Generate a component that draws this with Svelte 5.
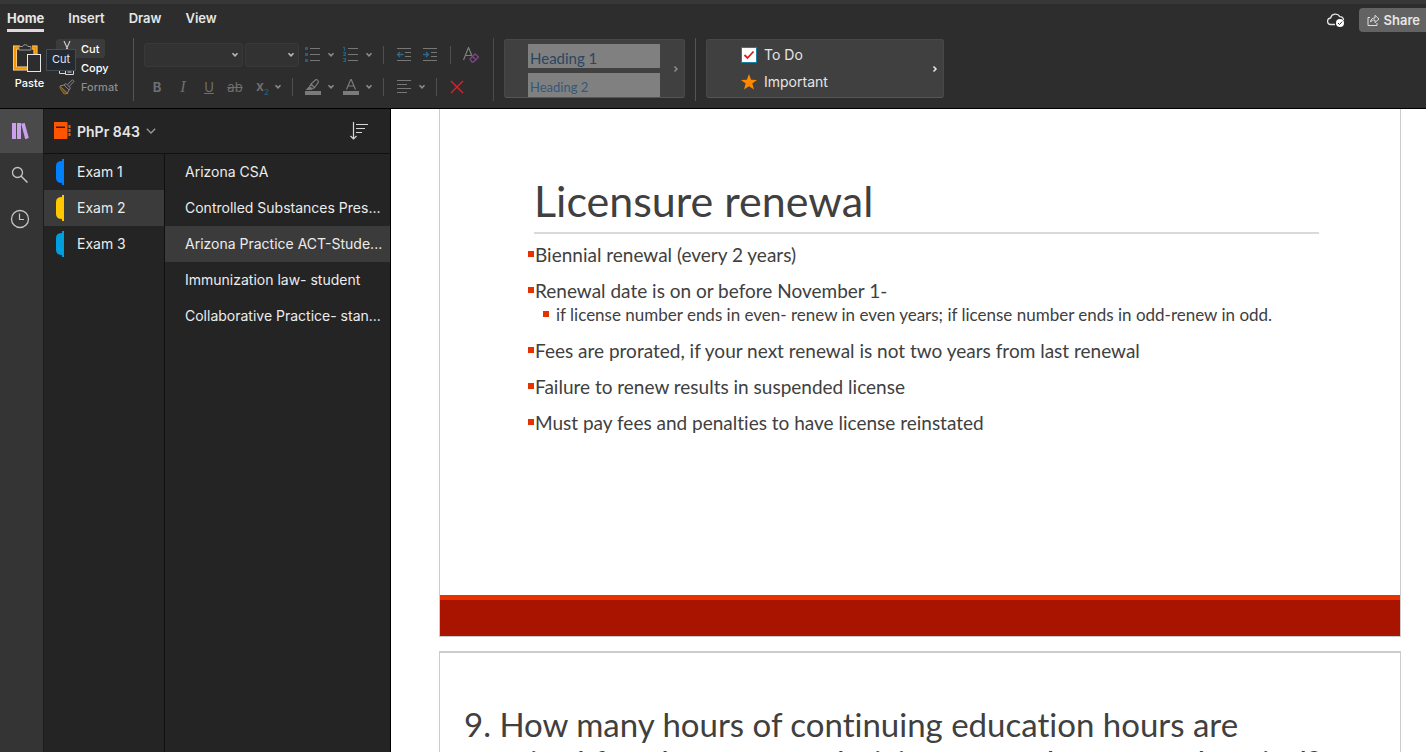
<script>
  const tabs = ['Home', 'Insert', 'Draw', 'View'];
  const sections = [
    { name: 'Exam 1', color: '#0080ff' },
    { name: 'Exam 2', color: '#ffc800' },
    { name: 'Exam 3', color: '#009edc' }
  ];
  const pages = [
    'Arizona CSA',
    'Controlled Substances Pres...',
    'Arizona Practice ACT-Stude...',
    'Immunization law- student',
    'Collaborative Practice- stan...'
  ];
  let tab = $state('Home');
  let section = $state('Exam 2');
  let page = $state(pages[2]);
</script>

{#snippet chevron()}
  <svg class="chev" width="8" height="6" viewBox="0 0 8 6" aria-hidden="true"><path d="M1.5 1.3 4 3.8l2.5-2.5" /></svg>
{/snippet}

{#snippet right()}
  <svg class="right" width="6" height="8" viewBox="0 0 6 8" aria-hidden="true"><path d="M1.5 1.5 4 4 1.5 6.5" /></svg>
{/snippet}

<div class="app">
  <header>
    <div class="tabrow">
      <nav aria-label="Ribbon tabs">
        {#each tabs as t}
          <button class="tab" class:active={tab === t} onclick={() => (tab = t)}>{t}</button>
        {/each}
      </nav>
      <div class="account">
        <svg width="18" height="14" viewBox="0 0 18 14" aria-label="Synced" role="img">
          <path d="M8 11.5H4A3.2 3.2 0 0 1 3.6 5 5 5 0 0 1 12.8 3.6 3.8 3.8 0 0 1 16.6 7" fill="none" stroke="#e4e4e4" stroke-width="1.3" />
          <circle cx="13" cy="10" r="4" fill="#fff" />
          <path d="m11 10 1.5 1.5 2.6-2.8" fill="none" stroke="#2d2d2d" />
        </svg>
        <button class="share">
          <svg width="13" height="12" viewBox="0 0 13 12" aria-hidden="true">
            <path d="M3 3.5H1v8h9V9M3.5 8c.3-3 2-4 4.5-4V1.3L12 5 8 8.6V6C6 6 4.5 6.5 3.5 8Z" fill="none" stroke="#dedede" />
          </svg>
          Share
        </button>
      </div>
    </div>

    <div class="ribbon">
      <div class="clipboard">
        <button class="paste">
          <svg width="30" height="32" viewBox="0 0 30 32" aria-hidden="true">
            <path d="M7 5.5H2v21h12M19 5.5h3.5V12" fill="none" stroke="#ffe2ae" stroke-width="4" />
            <path d="M7 5.5H2v21h12M19 5.5h3.5V12" fill="none" stroke="#f79400" stroke-width="2.6" />
            <path d="M6 8V4.5h3.5a3 3 0 0 1 5.5 0H18V8Z" fill="#2d2d2d" stroke="#9b9b9b" />
            <rect x="14.5" y="12.5" width="13" height="17" fill="#2d2d2d" stroke="#e6e6e6" />
          </svg>
          Paste
        </button>
        <div class="edits">
          <button class="edit hover">
            <svg width="16" height="16" viewBox="0 0 16 16" aria-hidden="true"><path d="m5 0 4 9M11 0 7 9" fill="none" stroke="#c8c8c8" stroke-width="1.2" /><circle cx="5" cy="12" r="2" fill="none" stroke="#c8c8c8" /><circle cx="11" cy="12" r="2" fill="none" stroke="#c8c8c8" /></svg>
            Cut
          </button>
          <button class="edit">
            <svg width="16" height="16" viewBox="0 0 16 16" aria-hidden="true"><path d="M6 13.5H.5V3.5H8M6.5 6.5h6l2 2v6h-8ZM8.5 9.5h4M8.5 12h4" fill="none" stroke="#d8d8d8" /></svg>
            Copy
          </button>
          <button class="edit" disabled>
            <svg width="16" height="16" viewBox="0 0 16 16" aria-hidden="true">
              <path d="M1 7 9 14.5 5 15 1 9ZM3 9l5 5" fill="#6b5023" stroke="#8d6c34" />
              <path d="m1 7 4-1 5 5-2 4M5 6l2-1.5L11.5 9 10 11M8.5 5.5 13.5.8l1.5 1.5-4.8 5.2" fill="none" stroke="#888" />
            </svg>
            Format
          </button>
        </div>
        <span class="tooltip" role="tooltip">Cut</span>
      </div>

      <div class="font">
        <div class="tools">
          <div class="combo wide"><select aria-label="Font" disabled><option></option></select>{@render chevron()}</div>
          <div class="combo narrow"><select aria-label="Font size" disabled><option></option></select>{@render chevron()}</div>
          <button class="tool list" aria-label="Bullets" disabled>
            <svg width="16" height="16" viewBox="0 0 16 16"><path d="M0 0h3v3H0zM0 6h3v3H0zM0 12h3v3H0z" fill="#235e7c" /><path d="M5 1.5h10M5 7.5h10M5 13.5h10" stroke="#777" /></svg>
            {@render chevron()}
          </button>
          <button class="tool" aria-label="Numbering" disabled>
            <svg width="16" height="16" viewBox="0 0 16 16"><path d="M0 .5h1.5V4M0 5.5h2.5v1L.5 8.5H3M0 11.5h2.5v3H0M1 13h1.5" fill="none" stroke="#235e7c" stroke-width="1.2" /><path d="M5 1.5h10M5 7.5h10M5 13.5h10" stroke="#777" /></svg>
            {@render chevron()}
          </button>
          <i class="bar"></i>
          <button class="tool" aria-label="Decrease indent" disabled>
            <svg width="16" height="16" viewBox="0 0 16 16"><path d="M1 1.5h14M9 5.5h6M9 9.5h6M1 13.5h14" stroke="#777" /><path d="M7.5 7.5H2M4 5 1.5 7.5 4 10" fill="none" stroke="#2a6b8d" stroke-width="1.3" /></svg>
          </button>
          <button class="tool indent" aria-label="Increase indent" disabled>
            <svg width="16" height="16" viewBox="0 0 16 16"><path d="M1 1.5h14M9 5.5h6M9 9.5h6M1 13.5h14" stroke="#777" /><path d="M1 7.5h5.5M4 5l2.5 2.5L4 10" fill="none" stroke="#2a6b8d" stroke-width="1.3" /></svg>
          </button>
          <i class="bar"></i>
          <button class="tool" aria-label="Clear formatting" disabled>
            <svg width="16" height="16" viewBox="0 0 16 16"><path d="M.5 13 5.5.5 9 9M2.5 8.5H8" fill="none" stroke="#808080" stroke-width="1.2" /><path d="m7 12 5-5 3.5 3-5 5H9Zm2.500-2.500L13 13" fill="none" stroke="#7d4583" stroke-width="1.3" /></svg>
          </button>
        </div>
        <div class="tools">
          <button class="letter" disabled><b>B</b></button>
          <button class="letter serif" disabled><em>I</em></button>
          <button class="letter" disabled><u>U</u></button>
          <button class="letter" disabled><s>ab</s></button>
          <button class="tool subs" aria-label="Subscript" disabled><span class="x">x<sub>2</sub></span>{@render chevron()}</button>
          <i class="bar"></i>
          <button class="tool" aria-label="Highlight" disabled>
            <svg width="16" height="16" viewBox="0 0 16 16"><path d="M0 12h16v4H0z" fill="#7b7b7b" /><path d="m6 5 5-4.5q2 0 2.5 2.5L9.5 8.5ZM6 5 4.5 8 2 10.5h4L9.5 8.5" fill="none" stroke="#7b7b7b" stroke-width="1.2" /><path d="M4.5 7.5 2 10.5h4l1.5-1.5Z" fill="#7b7b7b" /></svg>
            {@render chevron()}
          </button>
          <button class="tool" aria-label="Font color" disabled>
            <svg width="16" height="16" viewBox="0 0 16 16"><path d="M0 12h16v4H0z" fill="#7b7b7b" /><path d="M3.5 10.5 8 0l4.5 10.5M5 7h6" fill="none" stroke="#7b7b7b" stroke-width="1.2" /></svg>
            {@render chevron()}
          </button>
          <i class="bar"></i>
          <button class="tool" aria-label="Align" disabled>
            <svg width="16" height="16" viewBox="0 0 16 16"><path d="M1 1.5h14M1 5.5h10M1 9.5h14M1 13.5h10" stroke="#777" /></svg>
            {@render chevron()}
          </button>
          <i class="bar"></i>
          <button class="tool" aria-label="Delete">
            <svg width="16" height="16" viewBox="0 0 16 16"><path d="m2 2 12 12M14 2 2 14" stroke="#e0202c" stroke-width="1.4" /></svg>
          </button>
        </div>
      </div>

      <div class="styles">
        <div class="gallery dim">
          <div class="headings">
            <button class="h1" disabled>Heading 1</button>
            <button class="h2" disabled>Heading 2</button>
          </div>
          {@render right()}
        </div>
      </div>

      <div class="tags">
        <div class="gallery">
          <div class="taglist">
            <button class="tag">
              <svg width="16" height="16" viewBox="0 0 16 16" aria-hidden="true"><rect x=".5" y=".5" width="15" height="15" fill="#fff" stroke="#1d7ea3" /><path d="m3.5 8 3 3L12.5 4.5" fill="none" stroke="#e21b1b" stroke-width="1.8" /></svg>
              To Do
            </button>
            <button class="tag">
              <svg width="16" height="16" viewBox="0 0 16 16" aria-hidden="true"><path d="m8 0 2.1 5.7 5.9.2-4.7 3.7 1.7 6L8 12.2l-5 3.4 1.7-6L0 5.9l5.9-.2Z" fill="#ff8800" /></svg>
              Important
            </button>
          </div>
          {@render right()}
        </div>
      </div>
    </div>
  </header>

  <div class="body">
    <aside class="rail">
      <button class="railbtn active" aria-label="Notebooks">
        <svg width="18" height="18" viewBox="0 0 18 18"><path d="M1 1h4v16H1zM6 1h4v16H6zM10.2 1.8l3.5-.9L17.8 16l-3.6 1.2Z" fill="#c9a0ea" /></svg>
      </button>
      <button class="railbtn" aria-label="Search">
        <svg width="18" height="18" viewBox="0 0 18 18"><circle cx="6.5" cy="6.5" r="5" fill="none" stroke="#c4c4c4" stroke-width="1.3" /><path d="m10 10 6.5 6.5" stroke="#c4c4c4" stroke-width="1.5" /></svg>
      </button>
      <button class="railbtn" aria-label="Recent">
        <svg width="20" height="20" viewBox="0 0 20 20"><circle cx="10" cy="10" r="8.5" fill="none" stroke="#c4c4c4" stroke-width="1.3" /><path d="M9.5 4.5v6H14" fill="none" stroke="#c4c4c4" stroke-width="1.2" /></svg>
      </button>
    </aside>

    <div class="panel">
      <div class="bookrow">
        <button class="book">
          <svg width="17" height="18" viewBox="0 0 17 18" aria-hidden="true"><path d="M0 0h12.5q1 0 1 1v15q0 1-1 1H0zM14.5 3h2v3h-2zM14.5 7h2v3h-2zM14.5 11h2v3h-2z" fill="#ff5400" /><path d="M2 4.5h9V6H2z" fill="#242424" /></svg>
          <span>PhPr 843</span>
          <svg width="10" height="6" viewBox="0 0 10 6" aria-hidden="true"><path d="m.8.8 4.2 4.2L9.2.8" fill="none" stroke="#9a9a9a" stroke-width="1.3" /></svg>
        </button>
        <button class="sort" aria-label="Sort pages">
          <svg width="18" height="18" viewBox="0 0 18 18"><path d="M3.5 0v17M.5 14l3 3 3-3M6 2.5h12M6 6.5h9M6 10.5h6" fill="none" stroke="#d6d6d6" stroke-width="1.2" /></svg>
        </button>
      </div>
      <div class="lists">
        <nav class="sections" aria-label="Sections">
          {#each sections as s}
            <button class="row" class:active={section === s.name} onclick={() => (section = s.name)}>
              <svg width="8" height="26" viewBox="0 0 8 26" fill={s.color} aria-hidden="true"><path d="M6 0h2v26H6v-2Q0 24 0 19V7Q0 2 6 2Z" /></svg>
              <span>{s.name}</span>
            </button>
          {/each}
        </nav>
        <nav class="pages" aria-label="Pages">
          {#each pages as p}
            <button class="row" class:active={page === p} onclick={() => (page = p)}><span>{p}</span></button>
          {/each}
        </nav>
      </div>
    </div>

    <main>
      <section class="slide first">
        <div class="copy">
          <h1>Licensure renewal</h1>
          <ul>
            <li>Biennial renewal (every 2 years)</li>
            <li>
              Renewal date is on or before November 1-
              <ul><li>if license number ends in even- renew in even years; if license number ends in odd-renew in odd.</li></ul>
            </li>
            <li>Fees are prorated, if your next renewal is not two years from last renewal</li>
            <li>Failure to renew results in suspended license</li>
            <li>Must pay fees and penalties to have license reinstated</li>
          </ul>
        </div>
        <div class="band"></div>
      </section>
      <section class="slide second">
        <h2>9. How many hours of continuing education hours are required for pharmacy technicians over the renewal period?</h2>
      </section>
    </main>
  </div>
</div>

<style>
  :global(body) { margin: 0; background: #fff; }
  * { box-sizing: border-box; }
  .app { height: 100vh; overflow: hidden; display: flex; flex-direction: column; font-family: Inter, "Liberation Sans", sans-serif; color: #e6e6e6; }
  button { appearance: none; border: 0; margin: 0; padding: 0; background: none; color: inherit; font: inherit; text-align: left; }
  svg { display: block; flex: none; }

  header { flex: none; background: #2d2d2d; border-top: 4px solid #373737; border-bottom: 1px solid #000; }
  .tabrow { display: flex; justify-content: space-between; height: 32px; }
  nav { display: flex; }
  .tabrow nav { gap: 24px; padding-left: 7px; align-items: flex-start; }
  .tab { height: 28px; padding-top: 3px; font-size: 13px; font-weight: 600; border-bottom: 3px solid transparent; }
  .tab.active { font-weight: 700; border-color: #e0d8de; }
  .account { display: flex; align-items: center; gap: 14px; }
  .share { display: flex; align-items: center; gap: 4px; height: 24px; padding: 0 6px 0 8px; border-radius: 4px 0 0 4px; background: #636363; font-size: 13px; font-weight: 600; }

  .ribbon { display: flex; align-items: flex-start; height: 72px; padding-top: 2px; }
  .clipboard { position: relative; display: flex; width: 134px; height: 63px; border-right: 1px solid #555; }
  .paste { display: flex; flex-direction: column; align-items: center; width: 56px; padding: 4px 0 0 3px; gap: 2px; font-size: 11px; font-weight: 500; line-height: 14px; color: #fff; }
  .paste svg { margin-right: 4px; }
  .edits { display: flex; flex-direction: column; align-items: flex-start; padding-top: 1px; }
  .edit { display: flex; align-items: center; gap: 6px; height: 19px; padding: 0 6px 0 3px; border-radius: 3px; font-size: 11px; font-weight: 500; color: #fff; }
  .edit:disabled { color: #8c8c8c; }
  .edit.hover { background: #3b3b3b; }
  .tooltip { position: absolute; left: 46px; top: 11px; padding: 2px 5px 4px; background: #232a31; border: 1px solid #454c52; font-size: 11px; line-height: 14px; }

  .font { display: flex; flex-direction: column; gap: 8px; width: 360px; height: 63px; padding-left: 10px; border-right: 1px solid #4c4c4c; }
  .tools { display: flex; align-items: center; height: 24px; }
  .tools:first-child { margin-top: 5px; }
  .combo { display: grid; height: 24px; align-items: center; justify-items: end; margin-right: 2px; }
  .combo > :global(*) { grid-area: 1 / 1; }
  .combo .chev { margin-right: 4px; stroke: #bbb; }
  .combo select { appearance: none; width: 100%; height: 24px; border: 1px solid #393939; border-radius: 3px; background: #323232; opacity: 1; }
  .wide { width: 99px; }
  .narrow { width: 54px; }
  .chev { fill: none; stroke: #8c8c8c; stroke-width: 1.6; }
  .right { fill: none; stroke: #e8e8e8; stroke-width: 1.5; }
  .tool { display: flex; align-items: center; gap: 6px; margin-right: 8px; }
  .list { margin-left: 4px; }
  .bar { width: 1px; height: 18px; margin: 0 12px 0 2px; background: #4f4f4f; }
  .indent { margin-left: 2px; margin-right: 10px; }
  .letter { width: 26px; text-align: center; font-size: 13px; color: #6f6f6f; }
  .serif { font-family: "Liberation Serif", serif; font-size: 16px; }
  .subs { margin-left: 8px; gap: 2px; }
  .x { width: 16px; font-size: 14px; font-weight: 600; line-height: 16px; color: #6f6f6f; white-space: nowrap; }
  .x sub { font-size: 8px; line-height: 8px; color: #235e7c; }

  .styles { width: 202px; height: 63px; padding: 1px 10px 0; border-right: 1px solid #555; }
  .gallery { display: flex; align-items: center; justify-content: space-between; height: 59px; padding-right: 5px; border: 1px solid #484848; border-bottom-color: #555; border-radius: 3px; background: #404040; }
  .dim .right { stroke: #8c8c8c; }
  .headings { display: flex; flex-direction: column; align-self: flex-end; gap: 5px; padding-left: 23px; font-family: Lato, "Liberation Sans", sans-serif; }
  .headings button { width: 132px; height: 24px; padding: 4px 2px 0; background: #808080; line-height: 20px; white-space: nowrap; }
  .headings .h1 { font-size: 15px; color: #2b4661; }
  .headings .h2 { font-size: 13px; color: #34587c; }
  .tags { flex: none; width: 248px; padding: 1px 0 0 10px; }
  .taglist { display: flex; flex-direction: column; gap: 9px; padding-left: 34px; }
  .tag { display: flex; align-items: center; gap: 7px; font-size: 14px; line-height: 18px; }

  .body { flex: 1; min-height: 0; display: flex; }
  .rail { flex: none; width: 43px; background: #343434; }
  .railbtn { display: grid; place-items: center; width: 100%; height: 44px; padding-right: 3px; }
  .railbtn.active { background: #4a4a4a; }
  .panel { flex: none; display: flex; flex-direction: column; width: 348px; background: #242424; border-left: 1px solid #1c1c1c; border-right: 1px solid #000; }
  .bookrow { display: flex; align-items: center; justify-content: space-between; height: 45px; padding: 0 22px 0 10px; border-bottom: 1px solid #101010; }
  .book { display: flex; align-items: center; gap: 6px; font-size: 14px; font-weight: 600; }
  .lists { flex: 1; display: flex; }
  .sections, .pages { flex-direction: column; }
  .sections { width: 121px; border-right: 1px solid #101010; }
  .pages { flex: 1; min-width: 0; }
  .row { display: flex; align-items: center; width: 100%; height: 36px; font-size: 14px; color: #ececec; }
  .row.active { background: #3b3b3b; }
  .sections .row { gap: 13px; padding-left: 12px; }
  .pages .row { padding-left: 20px; }
  .row span { padding-bottom: 2px; white-space: nowrap; }

  main { flex: 1; min-width: 0; overflow: hidden; padding: 0 25px 0 48px; background: #fff; font-family: Lato, "Liberation Sans", sans-serif; font-variant-ligatures: none; color: #404040; }
  .slide { border: 1px solid #ccc; }
  .first { border-top: 0; }
  .copy { min-height: 486px; padding: 65px 81px 0 88px; }
  h1 { margin: 0 0 0 6px; padding-bottom: 4px; border-bottom: 2px solid #dadada; font-size: 43px; font-weight: 400; line-height: 54px; }
  ul { margin: 0; padding: 0; list-style: none; }
  .copy > ul { padding-top: 9px; font-size: 19px; line-height: 24px; }
  li { position: relative; padding-left: 7px; }
  .copy > ul > li { margin-bottom: 12px; }
  li::before { content: ""; position: absolute; left: 0; top: 8px; width: 6px; height: 6px; background: #e63200; }
  li ul { padding-left: 8px; font-size: 17px; }
  li li { padding-left: 13px; }
  .band { height: 41px; border-top: 5px solid #e63200; background: #a81400; }
  .second { margin-top: 14px; border-top-width: 2px; padding: 52px 60px 40px 24px; }
  h2 { margin: 0; font-size: 33px; font-weight: 400; line-height: 38px; }
</style>
